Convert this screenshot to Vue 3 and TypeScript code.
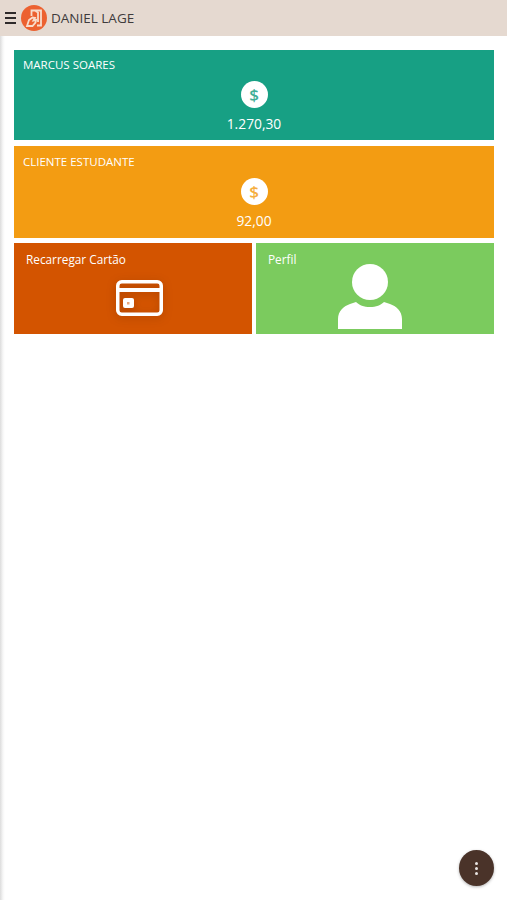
<template>
  <div class="page">
    <header class="topbar">
      <button class="menu-btn" aria-label="Menu">
        <span></span><span></span><span></span>
      </button>
      <div class="logo">
        <svg viewBox="0 0 26 26" width="26" height="26" fill="none" stroke="#f8dccb" stroke-width="1.800">
          <path d="M10.500 11V5.500H20v15h-4" />
          <path d="M14.500 6l2.500 1.500V17" />
          <path d="M6 21l2-6 3.500-2.500 2.500.5-1.500 2.500 2.500-.5-.5 2.500-3 3.500H9z" />
        </svg>
      </div>
      <span class="user-name">DANIEL LAGE</span>
    </header>

    <main class="content">
      <section
        v-for="card in balances"
        :key="card.name"
        class="tile balance"
        :class="card.tone"
      >
        <h2 class="balance-name">{{ card.name }}</h2>
        <div class="coin">$</div>
        <div class="amount">{{ card.amount }}</div>
      </section>

      <div class="tile-row">
        <section class="tile action recharge">
          <h2 class="action-title">Recarregar Cartão</h2>
          <svg class="card-icon" viewBox="0 0 47 36" width="47" height="36">
            <rect x="1.750" y="1.750" width="43.500" height="32.500" rx="4" fill="none" stroke="#fff" stroke-width="3.500" />
            <rect x="2" y="8" width="43" height="4" fill="#fff" />
            <rect x="7" y="18" width="11" height="10" rx="2" fill="#fff" />
            <rect x="11" y="22" width="2.500" height="2.500" fill="#e9a77c" />
          </svg>
        </section>
        <section class="tile action profile">
          <h2 class="action-title">Perfil</h2>
          <svg class="person-icon" viewBox="0 0 64 65" width="64" height="65" fill="#fff">
            <circle cx="32" cy="18" r="18" />
            <path d="M0 65V55C0 47 6 42 12 40l6-2c3 3 8 5 14 5s11-2 14-5l6 2c6 2 12 7 12 15v10z" />
          </svg>
        </section>
      </div>
    </main>

    <button class="fab" aria-label="Mais opções">
      <span></span><span></span><span></span>
    </button>
  </div>
</template>

<script setup lang="ts">
interface Balance {
  name: string;
  amount: string;
  tone: string;
}

const balances: Balance[] = [
  { name: "MARCUS SOARES", amount: "1.270,30", tone: "green" },
  { name: "CLIENTE ESTUDANTE", amount: "92,00", tone: "orange" }
];
</script>

<style>
html,
body {
  margin: 0;
  background: #fff;
}
</style>

<style scoped>
.page {
  position: relative;
  width: 507px;
  height: 900px;
  overflow: hidden;
  background: linear-gradient(to right, #dcdcdc, #f7f7f7 3px, #fff 5px);
  font-family: "Open Sans", "Noto Sans", sans-serif;
}

.topbar {
  height: 36px;
  display: flex;
  align-items: center;
  padding-left: 5px;
  background: #e5d9d0;
}

.menu-btn {
  width: 11px;
  height: 12px;
  padding: 0;
  border: none;
  background: none;
  display: flex;
  flex-direction: column;
  justify-content: space-between;
}

.menu-btn span {
  display: block;
  height: 2px;
  background: #2e2a2a;
}

.logo {
  width: 26px;
  height: 26px;
  margin-left: 5px;
  border-radius: 50%;
  background: #ec6130;
}

.logo svg {
  display: block;
}

.user-name {
  margin-left: 4px;
  font-size: 13.500px;
  font-weight: 500;
  color: #3f3b3c;
}

.content {
  padding: 14px 13px 0 14px;
  display: flex;
  flex-direction: column;
  gap: 5px;
}

.tile {
  box-sizing: border-box;
  color: #fff;
}

.balance {
  height: 92px;
  padding-top: 7px;
  display: flex;
  flex-direction: column;
  align-items: center;
}

.balance.green {
  height: 90px;
  margin-bottom: 1px;
}

.balance.orange {
  padding-top: 8px;
}

.green {
  background: #17a084;
}

.orange {
  background: #f39c12;
}

.balance-name {
  align-self: flex-start;
  margin: 0 0 0 9px;
  font-size: 11.500px;
  line-height: 16px;
  font-weight: 500;
}

.coin {
  width: 27px;
  height: 27px;
  margin-top: 8px;
  border-radius: 50%;
  background: #fff;
  display: flex;
  align-items: center;
  justify-content: center;
  font-size: 17px;
  font-weight: 600;
  line-height: 1;
}

.green .coin {
  color: #3fae97;
}

.orange .coin {
  color: #f5ae3e;
}

.amount {
  margin-top: 6px;
  font-size: 13.800px;
  line-height: 20px;
}

.tile-row {
  display: flex;
  gap: 4px;
}

.action {
  position: relative;
  flex: 1;
  height: 91px;
  display: flex;
  flex-direction: column;
  align-items: center;
}

.recharge {
  background: #d35400;
}

.profile {
  background: #7bcb5e;
}

.action-title {
  align-self: flex-start;
  margin: 8px 0 0 12px;
  font-size: 11.800px;
  line-height: 16px;
  font-weight: 400;
}

.card-icon {
  margin-top: 13px;
  margin-left: 13px;
  filter: drop-shadow(0 2px 4px rgba(90, 30, 0, 0.3));
}

.person-icon {
  position: absolute;
  left: 82px;
  top: 21px;
}

.fab {
  position: absolute;
  left: 459px;
  top: 850px;
  width: 35px;
  height: 36px;
  padding: 0;
  border: none;
  border-radius: 50%;
  background: #4a3329;
  box-shadow: 0 1px 3px rgba(0, 0, 0, 0.3);
  display: flex;
  flex-direction: column;
  align-items: center;
  justify-content: center;
  gap: 2px;
}

.fab span {
  width: 3px;
  height: 3px;
  border-radius: 50%;
  background: #e8e4e2;
}
</style>
